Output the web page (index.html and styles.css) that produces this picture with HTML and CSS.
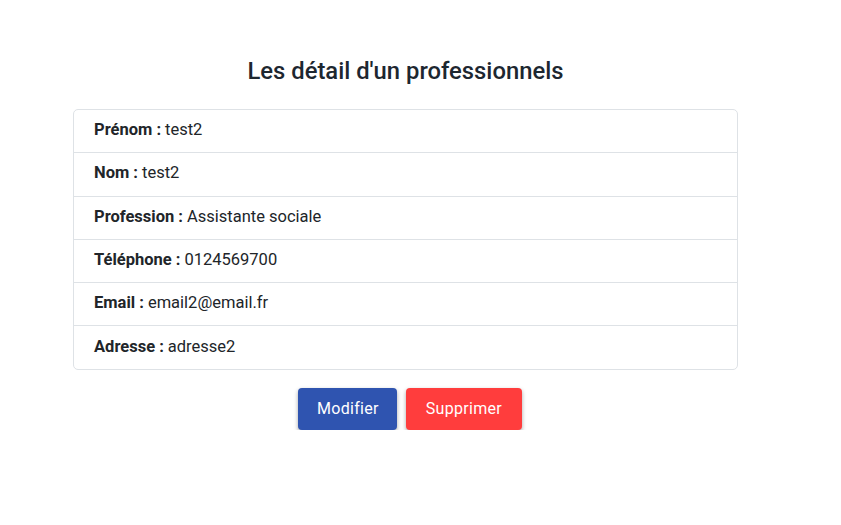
FILE: index.html
```html
<!DOCTYPE html>
<html lang="fr">
<head>
<meta charset="utf-8">
<link rel="stylesheet" href="styles.css">
</head>
<body>
<main class="page">
  <h1 class="title">Les détail d'un professionnels</h1>
  <ul class="details">
    <li class="row"><b>Prénom :</b> test2</li>
    <li class="row"><b>Nom :</b> test2</li>
    <li class="row"><b>Profession :</b> Assistante sociale</li>
    <li class="row"><b>Téléphone :</b> 0124569700</li>
    <li class="row"><b>Email :</b> email2@email.fr</li>
    <li class="row"><b>Adresse :</b> adresse2</li>
  </ul>
  <div class="actions">
    <button class="btn btn-edit">Modifier</button>
    <button class="btn btn-delete">Supprimer</button>
  </div>
</main>
</body>
</html>
```
FILE: styles.css
```css
html, body {
  margin: 0;
  padding: 0;
  background: #ffffff;
}
body {
  font-family: Roboto, "Liberation Sans", sans-serif;
  color: #212529;
}
.page {
  width: 665px;
  margin-left: 73px;
  padding-top: 57px;
}
.title {
  margin: 0 0 24px;
  text-align: center;
  font-size: 23.8px;
  font-weight: 500;
  line-height: 28px;
  color: #1d2730;
}
.details {
  list-style: none;
  margin: 0;
  padding: 0;
  border: 1px solid #dee2e6;
  border-radius: 5px;
}
.row {
  height: 42.3px;
  box-sizing: border-box;
  padding: 0 20px 3px;
  display: flex;
  align-items: center;
  gap: 4px;
  font-size: 16.5px;
  border-top: 1px solid #dee2e6;
  color: #212529;
}
.row:first-child {
  border-top: none;
}
.row + .row {
  height: 43.3px;
}
.row b {
  font-weight: 700;
}
.actions {
  display: flex;
  justify-content: center;
  gap: 9px;
  margin-top: 18px;
  padding-left: 9px;
}
.btn {
  height: 42px;
  border: none;
  border-radius: 4px;
  color: #ffffff;
  font-family: Roboto, "Liberation Sans", sans-serif;
  font-size: 16px;
  letter-spacing: 0.3px;
  padding: 0 19px;
  box-shadow: 0 2px 4px rgba(0, 0, 0, 0.35);
}
.btn-edit {
  background: #2f54b0;
  padding: 0 18px 0 19px;
}
.btn-delete {
  background: #ff3d3d;
  padding: 0 20px;
}
```
